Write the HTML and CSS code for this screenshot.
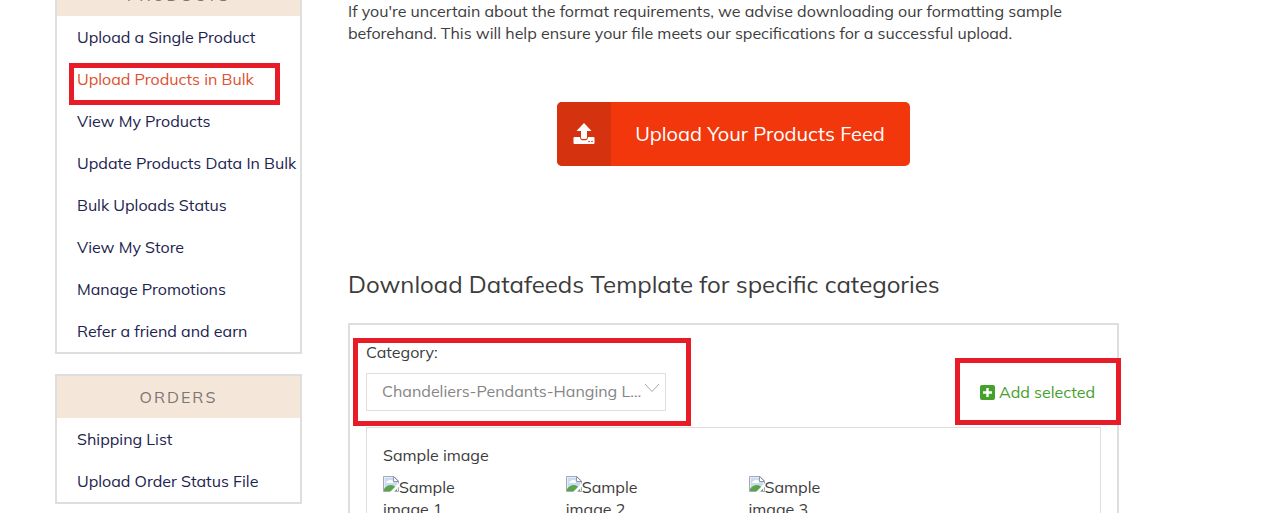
FILE: index.html
```
<!DOCTYPE html>
<html lang="en">
<head>
<meta charset="utf-8">
<title>Upload Products in Bulk</title>
<link rel="stylesheet" href="styles.css">
</head>
<body>
<svg class="defs" aria-hidden="true">
  <symbol id="broken" viewBox="0 0 16 16">
    <path d="M0.5 0.5H11L15.5 5V15.5H0.5Z" fill="#fff" stroke="#a3a9b8"/>
    <path d="M1.500 1.500H10V6H14.500V14.500H1.500Z" fill="#c9daf4"/>
    <path d="M3 7q0-2 2-2q1-2 3-1q2 0 2 2v1z" fill="#fff"/>
    <path d="M1 15V13Q4 9 8 9Q11 9 14 13V15Z" fill="#5aa545"/>
    <path d="M10.5 0.5V5.5H15.5Z" fill="#fff" stroke="#8e95a6"/>
    <path d="M7 16L16 7V10.500L11 16Z" fill="#fff"/>
  </symbol>
</svg>
<div class="page">
  <aside class="sidebar">
    <nav class="menu">
      <h2 class="menu-title">PRODUCTS</h2>
      <a class="menu-link" href="#">Upload a Single Product</a>
      <a class="menu-link active" href="#">Upload Products in Bulk<span class="mark mark-menu"></span></a>
      <a class="menu-link" href="#">View My Products</a>
      <a class="menu-link" href="#">Update Products Data In Bulk</a>
      <a class="menu-link" href="#">Bulk Uploads Status</a>
      <a class="menu-link" href="#">View My Store</a>
      <a class="menu-link" href="#">Manage Promotions</a>
      <a class="menu-link" href="#">Refer a friend and earn</a>
    </nav>
    <nav class="menu">
      <h2 class="menu-title">ORDERS</h2>
      <a class="menu-link" href="#">Shipping List</a>
      <a class="menu-link" href="#">Upload Order Status File</a>
    </nav>
  </aside>
  <main class="content">
    <p class="intro">If you're uncertain about the format requirements, we advise downloading our formatting sample beforehand. This will help ensure your file meets our specifications for a successful upload.</p>
    <button class="upload" type="button">
      <span class="upload-icon">
        <svg width="22" height="22" viewBox="0 0 22 22" aria-hidden="true">
          <path d="M11 0L18.500 8H14V14.500Q14 16 12.500 16H9.500Q8 16 8 14.500V8H3.500Z" fill="#fff"/>
          <path d="M1.500 14H7Q7.300 17.200 9.500 17.200H12.500Q14.700 17.200 15 14H20.500Q21.500 14 21.500 15V20Q21.500 21 20.500 21H1.500Q0.500 21 0.500 20V15Q0.500 14 1.500 14Z" fill="#fff"/>
          <circle cx="16" cy="18.500" r="0.800" fill="#d5330f"/><circle cx="19" cy="18.500" r="0.800" fill="#d5330f"/>
        </svg>
      </span>
      <span class="upload-text">Upload Your Products Feed</span>
    </button>
    <h1 class="heading">Download Datafeeds Template for specific categories</h1>
    <section class="panel">
      <div class="picker">
        <div class="field">
          <label for="category">Category:</label>
          <div class="select-wrap">
            <select id="category" class="select"><option>Chandeliers-Pendants-Hanging Lights</option></select>
            <svg class="chevron" width="16" height="10" viewBox="0 0 16 10" aria-hidden="true"><path d="M1 1L8 8.500L15 1" fill="none" stroke="#aaa"/></svg>
          </div>
          <span class="mark mark-field"></span>
        </div>
        <a class="add" href="#">
          <svg width="15" height="15" viewBox="0 0 15 15" aria-hidden="true"><rect width="15" height="15" rx="2" fill="#45a02c"/><path d="M7.500 3V12M3 7.500H12" stroke="#fff" stroke-width="2.400"/></svg>
          <span>Add selected</span>
          <span class="mark mark-add"></span>
        </a>
      </div>
      <div class="samples">
        <div>Sample image</div>
        <div class="sample-grid">
          <div class="sample"><svg class="broken"><use href="#broken"/></svg>Sample image 1</div>
          <div class="sample"><svg class="broken"><use href="#broken"/></svg>Sample image 2</div>
          <div class="sample"><svg class="broken"><use href="#broken"/></svg>Sample image 3</div>
        </div>
      </div>
    </section>
  </main>
</div>
</body>
</html>
```
FILE: styles.css
```
* { box-sizing: border-box; }
html { overflow: hidden; }
body {
  margin: 0;
  background: #fff;
  color: #3c3c3c;
  font: 400 16px/22px Muli, Mulish, "Open Sans", sans-serif;
}
a { text-decoration: none; }
.defs { position: absolute; width: 0; height: 0; }
.page { display: flex; gap: 46px; padding: 0 146px 0 55px; }

.sidebar { display: flex; flex-direction: column; flex: 0 0 247px; gap: 20px; margin-top: -28px; }
.menu { border: 2px solid #dedede; }
.menu-title {
  margin: 0;
  background: #f5e6da;
  color: #7c7674;
  font-size: 16px;
  font-weight: 400;
  line-height: 42px;
  letter-spacing: 2px;
  text-align: center;
}
.menu-link { position: relative; display: block; padding-left: 20px; line-height: 42px; color: #1c2350; white-space: nowrap; }
.menu-link.active { color: #e04f30; }

.mark { position: absolute; border: 5px solid #e81c26; pointer-events: none; }
.mark-menu { left: 12px; top: 5px; width: 211px; height: 42px; }
.mark-field { left: -13px; top: -3px; width: 338px; height: 88px; }
.mark-add { right: -26px; top: -23px; width: 166px; height: 67px; }

.content { flex: 1; min-width: 0; }
.intro { margin: 0; }
.upload {
  display: flex;
  margin: 58px auto 0;
  padding: 0;
  border: 0;
  border-radius: 5px;
  overflow: hidden;
  background: #f2370d;
  color: #fff;
  font: 400 20px/64px Muli, Mulish, "Open Sans", sans-serif;
}
.upload-icon { display: flex; align-items: center; justify-content: center; width: 54px; background: #d5330f; }
.upload-text { padding: 0 25px 0 24px; }
.heading { margin: 102px 0 23px; font-size: 24px; font-weight: 400; line-height: 32px; }

.panel { border: 2px solid #dedede; padding: 16px; }
.picker { display: flex; justify-content: space-between; align-items: flex-end; }
.field { position: relative; flex: 0 0 300px; }
.field label { display: block; margin-bottom: 10px; }
.select-wrap { position: relative; }
.select {
  display: block;
  width: 100%;
  height: 38px;
  padding: 0 22px 2px 15px;
  border: 1px solid #dedede;
  border-radius: 0;
  appearance: none;
  background: #fff;
  color: #858585;
  font: inherit;
  text-overflow: ellipsis;
}
.chevron { position: absolute; right: 6px; top: 10px; }
.add { position: relative; display: flex; align-items: center; gap: 4px; margin: 0 6px 8px 0; color: #45a02c; }

.samples { margin-top: 16px; padding: 16px 2px 16px 16px; border: 1px solid #dedede; }
.sample-grid { display: grid; grid-template-columns: repeat(4, 1fr); gap: 16px; margin-top: 10px; }
.sample { width: 80px; }
.broken { width: 16px; height: 16px; vertical-align: 1px; }
```
